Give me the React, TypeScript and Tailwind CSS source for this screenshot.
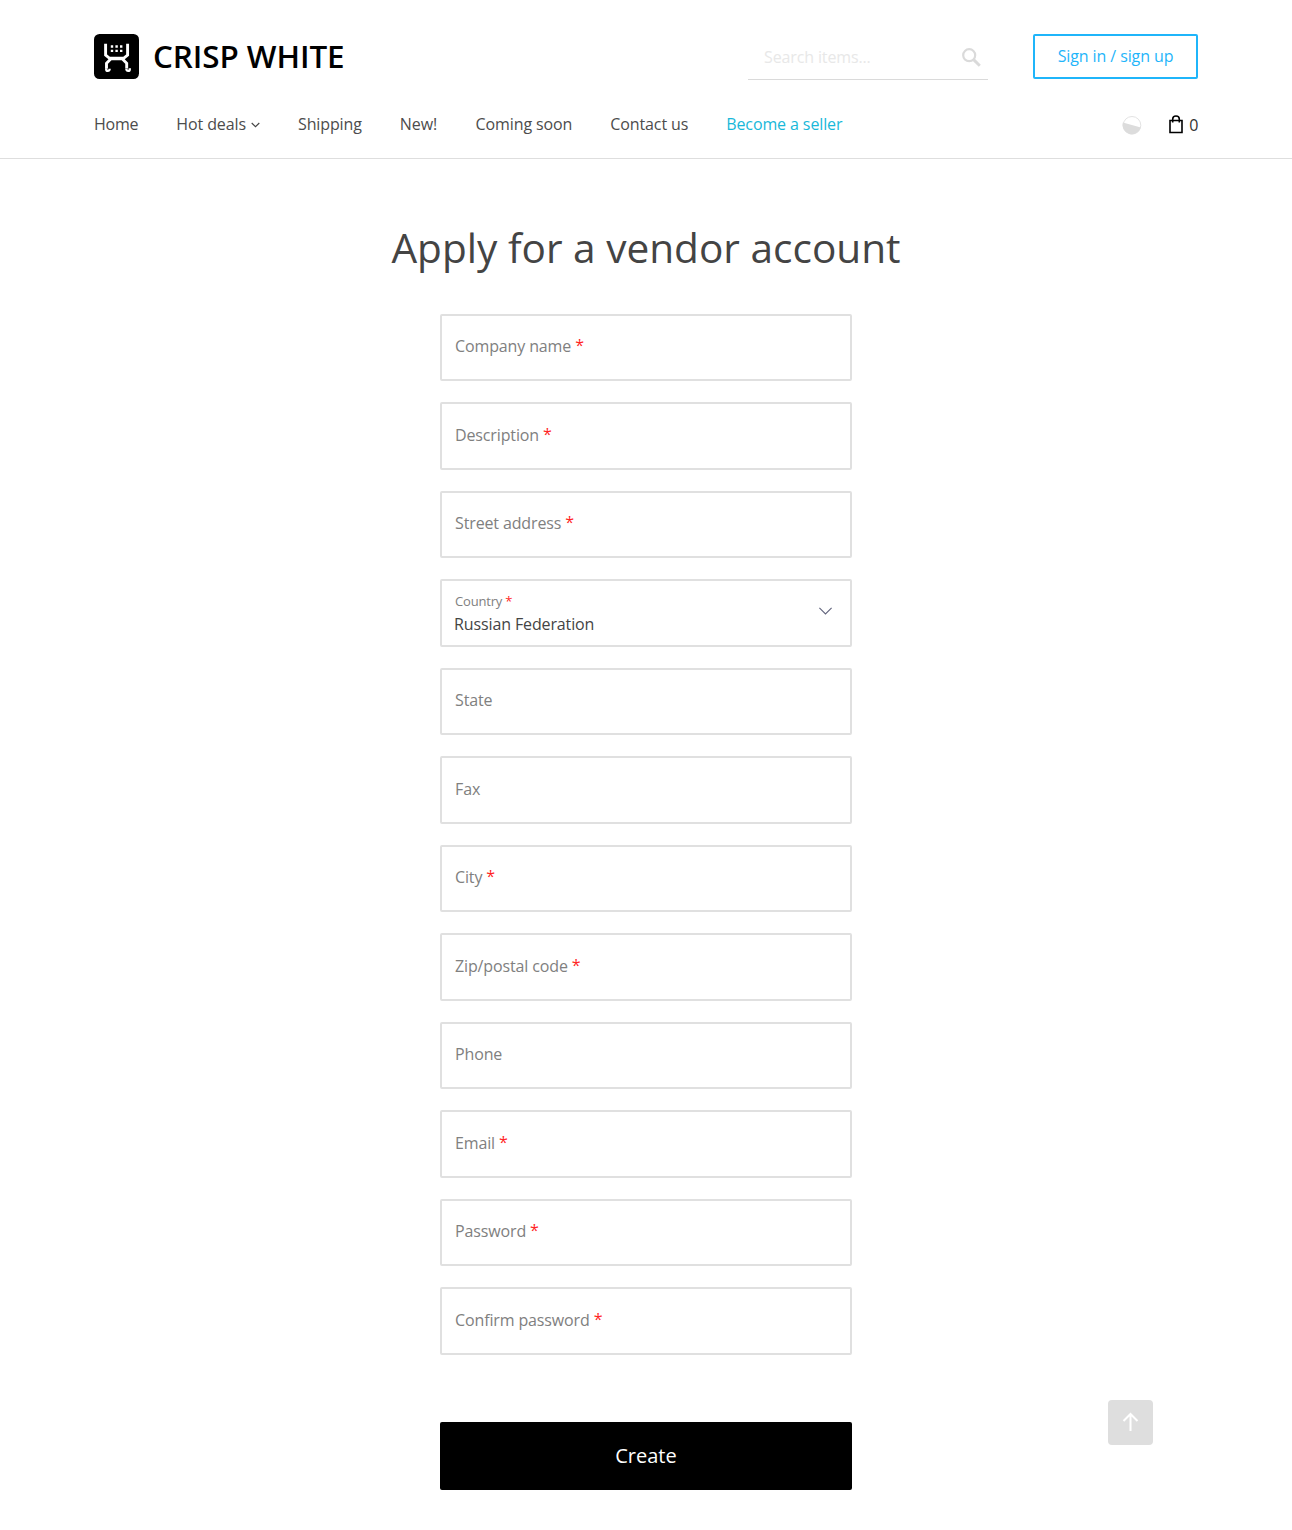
type FieldProps = { label: string; required?: boolean };

const fields: FieldProps[] = [
  { label: 'Company name', required: true },
  { label: 'Description', required: true },
  { label: 'Street address', required: true },
  { label: 'Country', required: true },
  { label: 'State' },
  { label: 'Fax' },
  { label: 'City', required: true },
  { label: 'Zip/postal code', required: true },
  { label: 'Phone' },
  { label: 'Email', required: true },
  { label: 'Password', required: true },
  { label: 'Confirm password', required: true },
];

function Logo() {
  return (
    <div className="flex items-center">
      <svg width="45" height="45" viewBox="0 0 45 45">
        <rect width="45" height="45" rx="5.5" fill="#000" />
        <g fill="none" stroke="#fff" strokeWidth="2.9">
          <path d="M11.6 9.8V21L15.6 24.3H29.6L33.6 21V9.8" />
          <path d="M12.5 34.5V29.3L17 24.8H28.2L32.7 29.3V34.5" />
        </g>
        <g fill="#fff">
          <path d="M16.8 11.3h2.4v2.4h-2.4zM21.4 11.3h2.4v2.4h-2.4zM26 11.3h2.4v2.4h-2.4zM16.8 15.7h2.4v2.4h-2.4zM21.4 15.7h2.4v2.4h-2.4zM26 15.7h2.4v2.4h-2.4z" />
        </g>
        <g fill="none" stroke="#fff" strokeWidth="2.3">
          <path d="M12.2 34.2V35.2A1.7 1.7 0 0 0 15.6 35.2V34.8" />
          <path d="M32.4 34.8V35.2A1.7 1.7 0 0 0 35.8 35.2V34.2" />
        </g>
      </svg>
      <span className="ml-[14px] pb-[2px] text-[31.4px] leading-[43px] font-semibold tracking-[-0.07px] whitespace-nowrap text-black">CRISP WHITE</span>
    </div>
  );
}

function Field({ label, required }: FieldProps) {
  if (label === 'Country') {
    return (
      <div className="flex h-[67.5px] items-center justify-between rounded-[2px] border-2 border-[#e0e0e0] pr-[18px] pl-[12px]">
        <div className="pt-px">
          <div className="pl-px text-[13px] leading-[20px] tracking-[-0.18px] text-[#808080]">
            {label}
            <span className="text-[#ff1f1f]"> *</span>
          </div>
          <div className="text-[16px] leading-[26px] tracking-[-0.12px] text-[#444]">Russian Federation</div>
        </div>
        <svg className="-mt-[4px]" width="13" height="8" viewBox="0 0 13 8" fill="none" stroke="#60637c" strokeWidth="1.1">
          <path d="M.4 .9 6.5 6.9 12.6 .9" />
        </svg>
      </div>
    );
  }
  return (
    <div className="h-[67.5px] rounded-[2px] border-2 border-[#e0e0e0] pt-[18.3px] pl-[13px] text-[16px] leading-6 tracking-[-0.13px] text-[#808080]">
      {label}
      {required && <span className="relative -top-px text-[#ff1f1f]"> *</span>}
    </div>
  );
}

export default function App() {
  return (
    <div className="relative min-h-[1530px] bg-white font-['Open_Sans',sans-serif] text-[#444]">
      <header className="h-[159px] border-b border-[#dedede] px-[94px] pt-[34px]">
        <div className="flex h-[46px] items-start">
          <Logo />
          <div className="ml-auto flex h-[46px] w-[240px] items-center justify-between border-b border-[#dadada] pr-[7px] pl-4">
            <span className="text-[16px] leading-6 tracking-[-0.13px] text-[#e8e8e8]">Search items...</span>
            <svg className="mt-[2px]" width="19" height="19" viewBox="0 0 19 19" fill="none" stroke="#dadada">
              <circle cx="7.2" cy="7.2" r="6" strokeWidth="2.2" />
              <path d="M11.6 11.6 17.8 17.8" strokeWidth="2.9" />
            </svg>
          </div>
          <button className="ml-[45px] h-[45px] w-[165px] rounded-[2px] border-2 border-[#1fb5fa] pb-px text-[16px] leading-6 tracking-[-0.1px] text-[#1fb5fa]">
            Sign in / sign up
          </button>
        </div>
        <div className="mt-[31px] flex items-center justify-between">
          <nav className="flex gap-[38px] text-[16px] leading-6 tracking-[-0.11px] text-[#4c4c4c]">
            <a className="tracking-[-0.22px]">Home</a>
            <a className="flex items-center">
              Hot deals
              <svg className="mt-[2px] ml-[5px]" width="9" height="6" viewBox="0 0 9 6" fill="none" stroke="#444" strokeWidth="1.1">
                <path d="M.7 1 4.5 4.7 8.3 1" />
              </svg>
            </a>
            <a>Shipping</a>
            <a>New!</a>
            <a className="ml-[0.5px]">Coming soon</a>
            <a>Contact us</a>
            <a className="text-[#18b8d9]">Become a seller</a>
          </nav>
          <div className="flex items-center pt-[2px]">
            <svg width="20" height="20" viewBox="0 0 20 20">
              <circle cx="10" cy="10.3" r="8.8" fill="#fff" stroke="#e3e3e3" strokeWidth="1" />
              <path d="M.9 7.4 18.8 12.5A9.3 9.3 0 1 1 .9 7.4Z" fill="#dcdcdc" />
            </svg>
            <svg className="-mt-[2px] ml-[27px]" width="14" height="19" viewBox="0 0 14 19" fill="none" stroke="#000">
              <path d="M1 5.5H13V17.5H1Z" strokeWidth="1.6" />
              <path d="M3.7 7.5V4a3.3 3 0 0 1 6.6 0V7.5" strokeWidth="1.6" />
            </svg>
            <span className="-mr-[0.4px] ml-[6.4px] text-[16px] leading-6 text-[#333]">0</span>
          </div>
        </div>
      </header>
      <main className="mx-auto w-[412px] pt-[59px]">
        <h1 className="-mx-[60px] text-center text-[40.6px] leading-[60px] whitespace-nowrap">Apply for a vendor account</h1>
        <form className="mt-[35.9px] flex flex-col gap-[21px]">
          {fields.map((f) => (
            <Field key={f.label} label={f.label} required={f.required} />
          ))}
          <button type="button" className="mt-[46px] h-[68px] rounded-[2px] bg-black text-[20px] text-white">
            Create
          </button>
        </form>
      </main>
      <button className="absolute top-[1400px] left-[1108px] flex h-[45px] w-[45px] items-center justify-center rounded-[4px] bg-[#dedede]">
        <svg className="-mt-px" width="17" height="20" viewBox="0 0 17 20" fill="none" stroke="#fff" strokeWidth="2">
          <path d="M8.5 19V2M1.5 9 8.5 2 15.5 9" />
        </svg>
      </button>
    </div>
  );
}
